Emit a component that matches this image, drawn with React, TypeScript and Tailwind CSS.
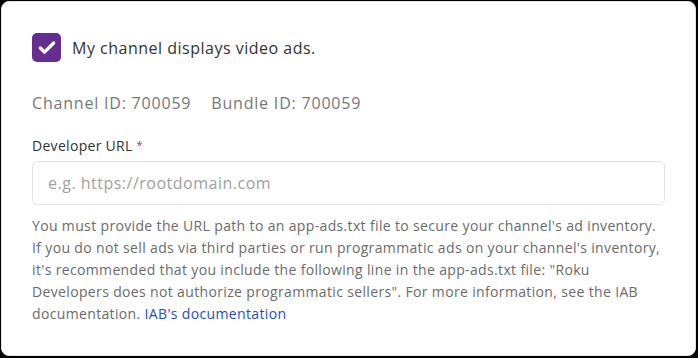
import { Check } from "lucide-react";

export default function App() {
  return (
    <div className="w-[698px] h-[358px] bg-black pt-px pl-px pr-[2px] pb-[2px]">
      <div
        className="h-full bg-white rounded-[8px] border border-[#e4e4e4] pl-[30px] pr-[30px] pt-[31px]"
        style={{ fontFamily: '"Open Sans", "Liberation Sans", sans-serif' }}
      >
        {/* checkbox */}
        <div className="flex items-center gap-[11px]">
          <div className="w-[29px] h-[29px] rounded-[5px] bg-[#662d91] flex items-center justify-center">
            <Check className="w-[20px] h-[20px] text-white" strokeWidth={4} />
          </div>
          <span className="text-[16px] tracking-[0.5px] text-[#333333]">My channel displays video ads.</span>
        </div>

        {/* ids */}
        <div className="mt-[29px] flex gap-[20px] text-[16px] tracking-[0.8px] text-[#777777]">
          <span>Channel ID: 700059</span>
          <span>Bundle ID: 700059</span>
        </div>

        {/* developer url */}
        <div className="mt-[20px] text-[14px] tracking-[0.3px] text-[#333333]">
          Developer URL <span className="text-[#e0164e] text-[11px] relative -top-[2px]">*</span>
        </div>
        <input
          type="text"
          placeholder="e.g. https://rootdomain.com"
          className="mt-[5px] w-[633px] h-[44px] rounded-[6px] border border-[#e2e2e2] px-[15px] text-[16px] tracking-[0.5px] text-[#333333] placeholder:text-[#a0a0a0] outline-none"
        />

        <p className="mt-[10px] text-[14px] leading-[22px] tracking-[0.35px] text-[#6b6b6b] whitespace-nowrap">
          You must provide the URL path to an app-ads.txt file to secure your channel's ad inventory.
          <br />
          If you do not sell ads via third parties or run programmatic ads on your channel's inventory,
          <br />
          it's recommended that you include the following line in the app-ads.txt file: "Roku
          <br />
          Developers does not authorize programmatic sellers". For more information, see the IAB
          <br />
          documentation. <a className="text-[#1d4fc4]">IAB's documentation</a>
        </p>
      </div>
    </div>
  );
}
